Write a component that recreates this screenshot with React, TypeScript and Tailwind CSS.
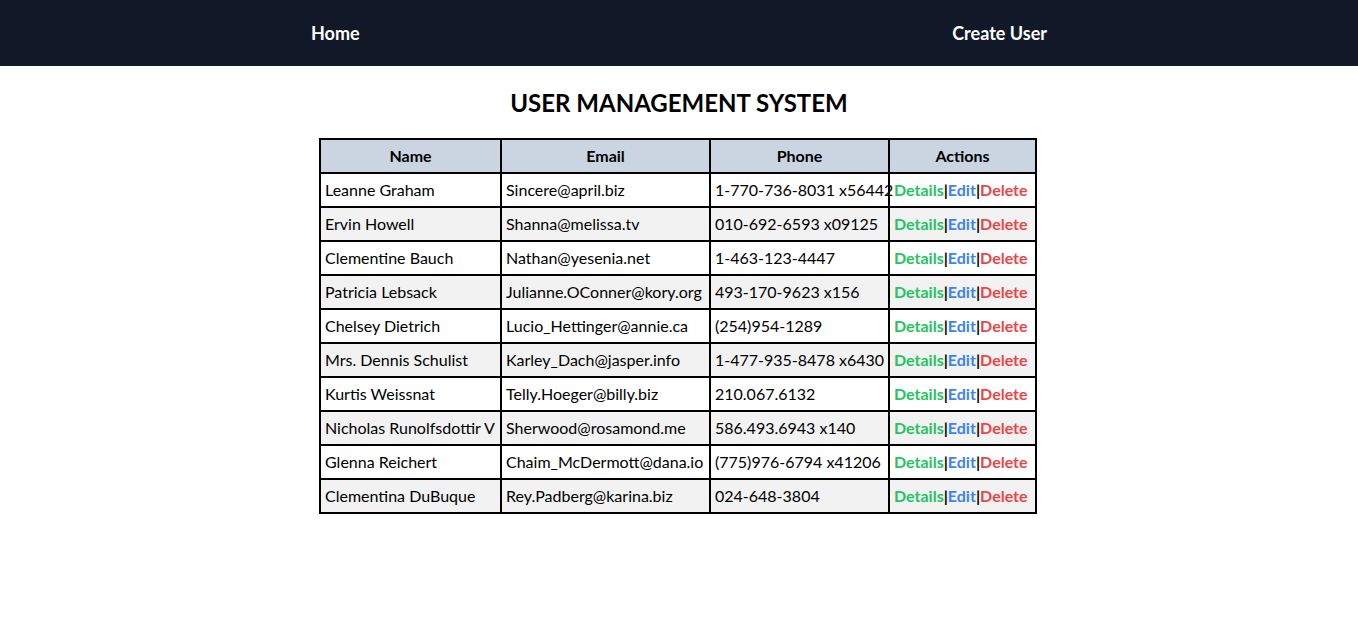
import React from 'react'

const users = [
  { name: 'Leanne Graham', email: 'Sincere@april.biz', phone: '1-770-736-8031 x56442' },
  { name: 'Ervin Howell', email: 'Shanna@melissa.tv', phone: '010-692-6593 x09125' },
  { name: 'Clementine Bauch', email: 'Nathan@yesenia.net', phone: '1-463-123-4447' },
  { name: 'Patricia Lebsack', email: 'Julianne.OConner@kory.org', phone: '493-170-9623 x156' },
  { name: 'Chelsey Dietrich', email: 'Lucio_Hettinger@annie.ca', phone: '(254)954-1289' },
  { name: 'Mrs. Dennis Schulist', email: 'Karley_Dach@jasper.info', phone: '1-477-935-8478 x6430' },
  { name: 'Kurtis Weissnat', email: 'Telly.Hoeger@billy.biz', phone: '210.067.6132' },
  { name: 'Nicholas Runolfsdottir V', email: 'Sherwood@rosamond.me', phone: '586.493.6943 x140' },
  { name: 'Glenna Reichert', email: 'Chaim_McDermott@dana.io', phone: '(775)976-6794 x41206' },
  { name: 'Clementina DuBuque', email: 'Rey.Padberg@karina.biz', phone: '024-648-3804' },
]

function App() {
  return (
    <div className="min-h-screen bg-white text-black font-['Lato','Open_Sans',sans-serif]">
      <nav className="bg-[#111827] h-[66px]">
        <div className="w-[736px] mx-auto h-full flex items-center justify-between text-white font-bold text-lg">
          <a href="#">Home</a>
          <a href="#">Create User</a>
        </div>
      </nav>
      <h1 className="text-2xl font-bold text-center mt-[21px] mb-[19px] leading-8">USER MANAGEMENT SYSTEM</h1>
      <table className="mx-auto border-collapse border-2 border-black table-fixed w-[718px] text-base -translate-x-px">
        <thead>
          <tr className="bg-[#cbd5e1] h-[34px]">
            <th className="border-2 border-black w-[181px]">Name</th>
            <th className="border-2 border-black w-[209px]">Email</th>
            <th className="border-2 border-black w-[179px]">Phone</th>
            <th className="border-2 border-black w-[147px]">Actions</th>
          </tr>
        </thead>
        <tbody>
          {users.map((u, i) => (
            <tr key={u.name} className={`h-[34px] ${i % 2 === 1 ? 'bg-[#f2f2f2]' : 'bg-white'}`}>
              <td className="border-2 border-black px-1 whitespace-nowrap">{u.name}</td>
              <td className="border-2 border-black px-1 whitespace-nowrap">{u.email}</td>
              <td className="border-2 border-black px-1 whitespace-nowrap">{u.phone}</td>
              <td className="border-2 border-black px-1 whitespace-nowrap font-bold">
                <a href="#" className="text-[#22c55e]">Details</a>|
                <a href="#" className="text-[#3b82f6]">Edit</a>|
                <a href="#" className="text-[#ef4444]">Delete</a>
              </td>
            </tr>
          ))}
        </tbody>
      </table>
    </div>
  )
}

export default App
